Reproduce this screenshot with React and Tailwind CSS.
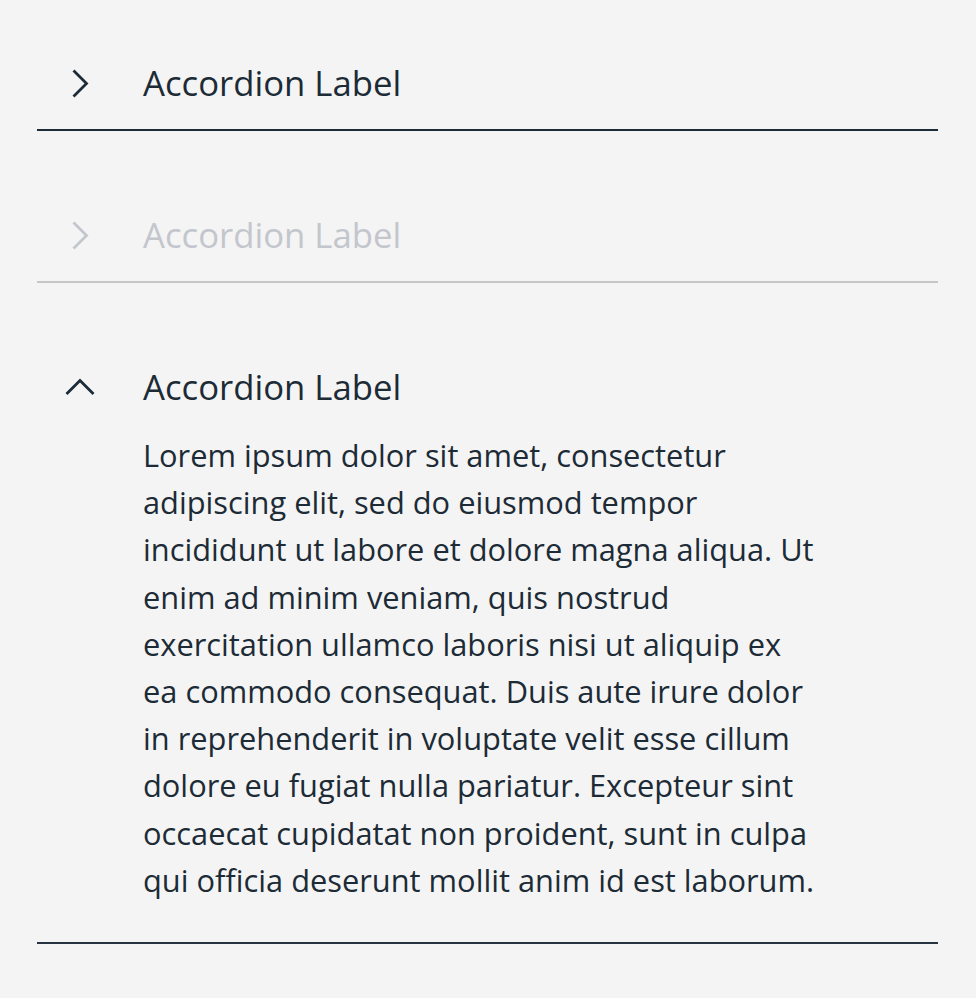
import React from "react";

const Chevron = ({ open }) => (
  <svg
    width="40"
    height="40"
    viewBox="0 0 40 40"
    fill="none"
    stroke="currentColor"
    strokeWidth="2.8"
    strokeLinecap="butt"
    strokeLinejoin="miter"
  >
    {open ? (
      <path d="M6.5 26 L20 12.5 L33.5 26" />
    ) : (
      <path d="M13.5 6.5 L26.5 19.5 L13.5 32.5" />
    )}
  </svg>
);

const Item = ({ open, disabled, first, last, children }) => (
  <div className={first ? "pt-[43px]" : "pt-16"}>
    <div
      className={`border-b-2 ${
        disabled
          ? "border-[#c6c6c6]"
          : last
          ? "border-[#263442]"
          : "border-[#1c2b36]"
      }`}
    >
      <div className="flex items-center h-[86px] pb-[5px]">
        <div
          className={`w-[106px] flex justify-start pl-[23px] ${
            disabled ? "text-[#c3c6cc]" : "text-[#1c2b36]"
          }`}
        >
          <Chevron open={open} />
        </div>
        <span
          className={`text-[34.7px] ${
            disabled ? "text-[#c3c6cc]" : "text-[#1c2b36]"
          }`}
        >
          Accordion Label
        </span>
      </div>
      {children}
    </div>
  </div>
);

export default function App() {
  return (
    <div
      className="min-h-[998px] bg-[#f4f4f4] pl-[37px] pr-[38px]"
      style={{ fontFamily: '"Open Sans", sans-serif' }}
    >
      <Item first />
      <Item disabled />
      <Item open last>
        <div className="pl-[106px] pb-[38px] -mt-px">
          <p className="w-[676px] text-[30.8px] leading-[47.2px] text-[#1c2b36]">
            Lorem ipsum dolor sit amet, consectetur adipiscing elit, sed do
            eiusmod tempor incididunt ut labore et dolore magna aliqua. Ut enim
            ad minim veniam, quis nostrud exercitation ullamco laboris nisi ut
            aliquip ex ea commodo consequat. Duis aute irure dolor in
            reprehenderit in voluptate velit esse cillum dolore eu fugiat nulla
            pariatur. Excepteur sint occaecat cupidatat non proident, sunt in
            culpa qui officia deserunt mollit anim id est laborum.
          </p>
        </div>
      </Item>
    </div>
  );
}
